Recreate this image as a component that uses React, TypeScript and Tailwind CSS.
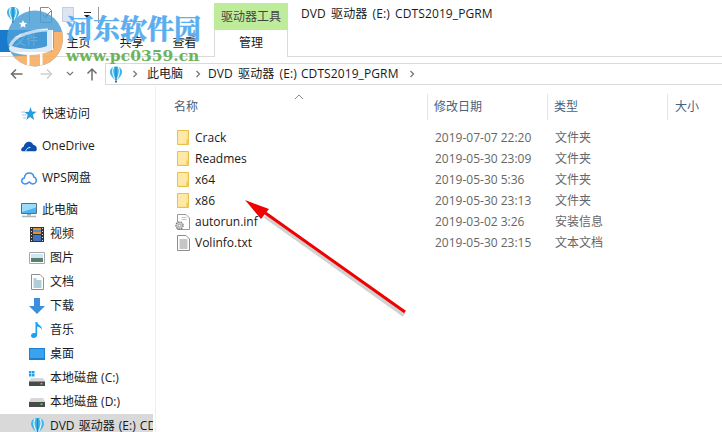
import React from "react";

const cjk = "font-['Open_Sans','Noto_Sans_CJK_SC',sans-serif]";

const Chevron = ({ className = "" }: { className?: string }) => (
  <svg width="6" height="8" viewBox="0 0 6 8" className={`shrink-0 ${className}`}>
    <path d="M1.5 1l3 3-3 3" fill="none" stroke="#777" strokeWidth="1.3" />
  </svg>
);

// CorelDRAW style balloon, used for the drive
const Balloon = ({ w = 12, h = 16 }: { w?: number; h?: number }) => (
  <svg width={w} height={h} viewBox="0 0 12 16" className="shrink-0">
    <path d="M6 0C2 0 0 2.500 0 5.500 0 8.800 3 11.800 5 13.500h2c2-1.700 5-4.700 5-8C12 2.500 10 0 6 0z" fill="#3fb4e8" />
    <path d="M3.800.6C2.800 2 2.400 4 2.700 6c.3 2.500 1.300 5 2.500 7M8.200.6C9.200 2 9.600 4 9.300 6c-.3 2.500-1.300 5-2.500 7" fill="none" stroke="#e6f8fd" strokeWidth="1.200" />
    <path d="M6 .5v13" stroke="#1787c8" strokeWidth="1.200" />
    <path d="M5 14h2v2H5z" fill="#2b6f9f" />
  </svg>
);

const Folder = () => (
  <svg width="12" height="15" viewBox="0 0 12 15" className="shrink-0">
    <path d="M.5.5h11v14H.5z" fill="#fde28f" stroke="#e9c04e" />
    <path d="M1 1h8.500v12H1z" fill="#ffe9a8" />
    <path d="M9.500 9.500h2v5h-2z" fill="#f2c94f" />
  </svg>
);

const InfIcon = () => (
  <svg width="15" height="16" viewBox="0 0 15 16" className="shrink-0 -ml-[2px]">
    <path d="M2.500.5h8.500l3.500 3.500v11.500h-12z" fill="#fff" stroke="#9a9a9a" />
    <path d="M6.500 3.500h5M6.500 5.500h5" stroke="#c4c4c4" />
    <circle cx="4.500" cy="11.500" r="3.600" fill="#d0d0d0" stroke="#777" strokeDasharray="1.600 .9" strokeWidth="1.200" />
    <circle cx="4.500" cy="11.500" r="1.300" fill="#fff" stroke="#777" strokeWidth=".6" />
  </svg>
);

const TxtIcon = () => (
  <svg width="13" height="16" viewBox="0 0 13 16" className="shrink-0">
    <path d="M.5.5h8.500l3.500 3.500v11.500H.5z" fill="#fff" stroke="#8c8c8c" />
    <path d="M2.500 5h8M2.500 7h8M2.500 9h8M2.500 11h8M2.500 13h8" stroke="#8c8c8c" strokeWidth="1" />
  </svg>
);

const icons: Record<string, React.ReactNode> = {
  star: (
    <svg width="16" height="14" viewBox="0 0 16 14">
      <path d="M9.500 0l1.500 4.600 4.500.2-3.600 2.900L13.200 13 9 10.100 5.400 13l1.200-5.200L3.500 5l4.400-.3z" fill="#2b9be0" />
      <path d="M0 5h4M1 8h4M2 11h3" stroke="#9ccdec" />
    </svg>
  ),
  cloud: (
    <svg width="17" height="11" viewBox="0 0 17 11">
      <path d="M1 10.500C-.5 9 .3 6.300 2.600 6 3.600 2.400 6 .5 8.500.5c2 0 3.700 1.200 4.500 3.200 2.300.300 4 2.400 3.800 4.600-.1 1-.5 1.700-1.100 2.200z" fill="#0b4fb0" />
      <path d="M5 10.500C5.500 8 7.500 6.500 10 6.500" stroke="#fff" fill="none" />
    </svg>
  ),
  wps: (
    <svg width="16" height="13" viewBox="0 0 16 13">
      <path d="M4 12C2 12 .8 10.500.8 9 .8 7.400 2 6.200 3.300 6 3.700 3 5.800 1 8.300 1c2.400 0 4.200 1.700 4.500 4 1.500.3 2.500 1.500 2.500 3.200 0 2-1.500 3.800-3.500 3.800-1.500 0-2.500-1-3.500-2-1 1-2 2-4.300 2z" fill="none" stroke="#3f8fe8" strokeWidth="1.500" />
    </svg>
  ),
  pc: (
    <svg width="16" height="15" viewBox="0 0 16 15">
      <path d="M.5.5h15v10H.5z" fill="#4db4ee" stroke="#5c6f80" />
      <path d="M1 1h14v3.500L1 9z" fill="#9bdcf9" />
      <path d="M6 11h4v1.500H6z" fill="#9aa6b0" />
      <path d="M1 13.500h14" stroke="#a9b6c0" strokeWidth="1.500" />
    </svg>
  ),
  video: (
    <svg width="14" height="15" viewBox="0 0 14 15">
      <path d="M0 0h14v15H0z" fill="#333" />
      <path d="M3 1h8v6H3z" fill="#e0913c" />
      <path d="M3 8h8v6H3z" fill="#3f74c4" />
      <path d="M3 3h8v2H3z" fill="#4a8fd6" />
      <path d="M1 1.500h1M1 4.500h1M1 7.500h1M1 10.500h1M1 13.500h1M12 1.500h1M12 4.500h1M12 7.500h1M12 10.500h1M12 13.500h1" stroke="#ddd" />
    </svg>
  ),
  pic: (
    <svg width="16" height="12" viewBox="0 0 16 12">
      <path d="M.5.5h15v11H.5z" fill="#fff" stroke="#a8a8a8" />
      <path d="M2 2h12v4H2z" fill="#cfe6f5" />
      <path d="M2 6h12v4H2z" fill="#58806e" />
    </svg>
  ),
  doc: (
    <svg width="13" height="16" viewBox="0 0 13 16">
      <path d="M.5.5h8.500l3.500 3.500v11.500H.5z" fill="#fff" stroke="#8f8f8f" />
      <path d="M2.500 5h3M2.500 7h8M2.500 9h8M2.500 11h8M2.500 13h8" stroke="#5f9db5" />
    </svg>
  ),
  down: (
    <svg width="16" height="16" viewBox="0 0 16 16">
      <path d="M5 0h6v8h5l-8 8-8-8h5z" fill="#3b8fdc" />
    </svg>
  ),
  music: (
    <svg width="12" height="16" viewBox="0 0 12 16">
      <path d="M4.500 0h1.700c.4 3 5.300 3.500 4.800 8-.5-1.800-2.500-3-4.800-3.500V13c0 1.800-1.800 3-3.500 3S0 15 0 13.500 1.500 11 3 11c.6 0 1.100.1 1.500.3z" fill="#1ea0ee" />
    </svg>
  ),
  desk: (
    <svg width="16" height="12" viewBox="0 0 16 12">
      <path d="M0 0h16v12H0z" fill="#1c7fd0" />
      <path d="M1 1h14v9H1z" fill="#3aa3ee" />
    </svg>
  ),
  c: (
    <svg width="16" height="15" viewBox="0 0 16 15">
      <path d="M0 0h2.500v2.500H0zM3 0h2.500v2.500H3zM0 3h2.500v2.500H0zM3 3h2.500v2.500H3z" fill="#1ea0ee" />
      <path d="M2 7h12l2 3v5H0v-5z" fill="#d8d8d8" />
      <path d="M0 10.500h16V15H0z" fill="#4a4a4a" />
      <path d="M11.500 12h2v1.500h-2z" fill="#4fe04f" />
    </svg>
  ),
  d: (
    <svg width="16" height="9" viewBox="0 0 16 9">
      <path d="M2 0h12l2 3.500V9H0V3.500z" fill="#d8d8d8" />
      <path d="M0 4h16v5H0z" fill="#4a4a4a" />
      <path d="M11.500 5.500h2V7h-2z" fill="#4fe04f" />
    </svg>
  ),
  dvd: <Balloon w={13} h={17} />,
};

const nav = [
  { label: "快速访问", icon: "star", top: true },
  { label: "OneDrive", icon: "cloud", top: true },
  { label: "WPS网盘", icon: "wps", top: true },
  { label: "此电脑", icon: "pc", top: true },
  { label: "视频", icon: "video" },
  { label: "图片", icon: "pic" },
  { label: "文档", icon: "doc" },
  { label: "下载", icon: "down" },
  { label: "音乐", icon: "music" },
  { label: "桌面", icon: "desk" },
  { label: "本地磁盘 (C:)", icon: "c" },
  { label: "本地磁盘 (D:)", icon: "d" },
  { label: "DVD 驱动器 (E:) CDTS2019_PGRM", icon: "dvd", active: true },
];

const files = [
  { name: "Crack", date: "2019-07-07 22:20", type: "文件夹", size: "" },
  { name: "Readmes", date: "2019-05-30 23:09", type: "文件夹", size: "" },
  { name: "x64", date: "2019-05-30 5:36", type: "文件夹", size: "" },
  { name: "x86", date: "2019-05-30 23:13", type: "文件夹", size: "" },
  { name: "autorun.inf", date: "2019-03-02 3:26", type: "安装信息", size: "1 KB" },
  { name: "Volinfo.txt", date: "2019-05-30 23:15", type: "文本文档", size: "1 KB" },
];

const Watermark = () => (
  <>
    <svg width="56" height="57" viewBox="0 0 56 57" className="absolute left-[7px] top-[10px] opacity-85">
      <defs>
        <clipPath id="disc">
          <circle cx="28" cy="28.500" r="28" />
        </clipPath>
      </defs>
      <g clipPath="url(#disc)">
        <path d="M0 0h56v57H0z" fill="#4d9fd6" />
        <path d="M0 46Q25 48 47 38V22H56V57H0z" fill="#f7a95a" />
        <path d="M2 38Q24 46 43 38" fill="none" stroke="#fff" strokeWidth="6" />
        <path d="M40 20h6v20h-6z" fill="#fff" />
        <path d="M3 36Q8 26 18 24 30 20 41 20" fill="none" stroke="#dcecf6" strokeWidth="3" />
        <path d="M20 45h2.500v12H20zM33 44h2.500v13H33z" fill="#fff" />
        <path d="M16 10l1.200 2.800 2.800.2-2.100 1.900.7 2.800-2.600-1.500-2.600 1.500.7-2.800-2.100-1.900 2.800-.2z" fill="#fff" />
      </g>
    </svg>
    <div className="absolute left-[66px] top-[10px] font-['Noto_Serif_CJK_SC','Noto_Sans_CJK_SC',serif] text-[27px] leading-[36px] font-bold text-[#5aaef0] [-webkit-text-stroke:0.6px_#5aaef0] whitespace-nowrap">
      河东软件园
    </div>
    <div className="absolute left-[66px] top-[47px] font-['DejaVu_Serif',serif] text-[15.5px] leading-[18px] font-bold text-[#6cb35a] whitespace-nowrap">
      www.pc0359.cn
    </div>
  </>
);

export default function App() {
  return (
    <div className={`relative w-[722px] h-[432px] overflow-hidden bg-white text-[12px] text-[#1a1a1a] ${cjk}`}>
      {/* Title and ribbon tabs */}
      <div className="h-[57px] flex flex-col border-b border-[#dadada]">
        <div className="h-[30px] flex items-start">
          <div className="w-[214px] h-[30px] flex items-center pl-[7px] pb-[1px]">
            <Balloon w={12} h={16} />
            <div className="w-px h-[16px] bg-[#999] ml-[10px]" />
            <svg width="12" height="16" viewBox="0 0 12 16" className="ml-[10px]">
              <path d="M.5.5h8l3 3v12H.5z" fill="#fff" stroke="#888" />
              <path d="M3 8l2.500 2.500L8 8" fill="none" stroke="#555" />
              <path d="M6 9l5-5" stroke="#d9662b" />
            </svg>
            <div className="w-[12px] h-[15px] bg-[#dde5f2] border border-[#c5cfe0] ml-[10px]" />
            <div className="w-[8px] ml-[9px] flex flex-col items-center gap-[2px]">
              <div className="w-[7px] h-px bg-[#222]" />
              <div className="w-0 h-0 border-x-[3px] border-x-transparent border-t-[3px] border-t-[#222]" />
            </div>
            <div className="w-px h-[16px] bg-[#999] ml-[7px]" />
          </div>
          <div className="w-[74px] h-[27px] mt-[3px] bg-[#bfec9a] flex items-center justify-center text-[#444]">驱动器工具</div>
          <div className="ml-[13px] h-[30px] leading-[28px] whitespace-nowrap [word-spacing:2px] tracking-[0.1px]">DVD 驱动器 (E:) CDTS2019_PGRM</div>
        </div>
        <div className="flex-1 flex">
          <div className="w-[52px] h-[22px] bg-[#1979ca] text-white flex items-center justify-center">文件</div>
          <div className="w-[162px] flex">
            <div className="w-[53px] text-center leading-[25px]">主页</div>
            <div className="w-[53px] text-center leading-[25px]">共享</div>
            <div className="w-[53px] text-center leading-[25px]">查看</div>
          </div>
          <div className="w-[74px] h-[27px] border-x border-[#dadada] text-center leading-[25px] bg-white">管理</div>
        </div>
      </div>

      {/* Address bar */}
      <div className="h-[29px] pt-[6px] flex items-start">
        <div className="w-[105px] h-[22px] flex items-center pl-[10px]">
          <svg width="13" height="12" viewBox="0 0 13 12">
            <path d="M12.500 6H1.500M6 1.500L1.500 6 6 10.500" fill="none" stroke="#6d6d6d" strokeWidth="1.500" />
          </svg>
          <svg width="13" height="12" viewBox="0 0 13 12" className="ml-[17px]">
            <path d="M.5 6h11M7 1.500L11.500 6 7 10.500" fill="none" stroke="#cfcfcf" strokeWidth="1.500" />
          </svg>
          <svg width="8" height="6" viewBox="0 0 8 6" className="ml-[13px]">
            <path d="M1 1l3 3 3-3" fill="none" stroke="#777" strokeWidth="1.200" />
          </svg>
          <svg width="12" height="14" viewBox="0 0 12 14" className="ml-[12px]">
            <path d="M6 13.500V2M1.500 6.500L6 2l4.500 4.500" fill="none" stroke="#6d6d6d" strokeWidth="1.500" />
          </svg>
        </div>
        <div className="flex-1 h-[22px] border-y border-l border-[#d9d9d9] flex items-center pl-[4px] whitespace-nowrap">
          <Balloon w={12} h={17} />
          <Chevron className="ml-[10px]" />
          <span className="ml-[9px]">此电脑</span>
          <Chevron className="ml-[12px]" />
          <span className="ml-[7px] [word-spacing:2px] tracking-[0.1px]">DVD 驱动器 (E:)</span>
          <span className="ml-[4px] tracking-[0.1px]">CDTS2019_PGRM</span>
          <Chevron className="ml-[10px]" />
        </div>
      </div>

      <div className="flex h-[346px]">
        {/* Navigation pane */}
        <div className="w-[156px] shrink-0 border-r border-[#efefef] pt-[16px] overflow-hidden">
          {nav.map((n, i) => (
            <div
              key={n.label}
              className={`h-[24px] flex items-center whitespace-nowrap overflow-hidden ${i < 3 ? "mb-[8px]" : ""} ${n.active ? "bg-[#d9d9d9] w-[153px] [word-spacing:1px]" : ""}`}
            >
              <div className={`flex justify-center shrink-0 w-[16px] ${n.top ? "ml-[21px]" : "ml-[29px]"}`}>{icons[n.icon]}</div>
              <span className="ml-[5px]">{n.label}</span>
            </div>
          ))}
        </div>

        {/* File list */}
        <div className="flex-1 min-w-0 relative">
          <svg width="10" height="6" viewBox="0 0 10 6" className="absolute left-[138px] top-[8px]">
            <path d="M1 5l4-4 4 4" fill="none" stroke="#888" />
          </svg>
          <div className="h-[41px] flex text-[#4c607a]">
            <div className="w-[272px] h-[26px] mt-[8px] pl-[18px] leading-[26px] border-r border-[#e5e5e5]">名称</div>
            <div className="w-[120px] h-[26px] mt-[8px] pl-[6px] leading-[26px] border-r border-[#e5e5e5]">修改日期</div>
            <div className="w-[120px] h-[26px] mt-[8px] pl-[6px] leading-[26px] border-r border-[#e5e5e5]">类型</div>
            <div className="pl-[7px] mt-[8px] leading-[26px]">大小</div>
          </div>
          {files.map((f) => (
            <div key={f.name} className="h-[21px] flex items-center whitespace-nowrap">
              <div className="w-[272px] flex items-center pl-[21px]">
                <div className="w-[18px] flex justify-start">
                  {f.name.endsWith(".inf") ? <InfIcon /> : f.name.endsWith(".txt") ? <TxtIcon /> : <Folder />}
                </div>
                <span>{f.name}</span>
              </div>
              <div className="w-[120px] pl-[7px] text-[#666]">{f.date}</div>
              <div className="w-[120px] pl-[7px] text-[#666]">{f.type}</div>
              <div className="w-[54px] text-right text-[#666] relative left-[30px]">{f.size}</div>
            </div>
          ))}
        </div>
      </div>

      <Watermark />

      {/* Red annotation arrow */}
      <svg width="722" height="432" className="absolute left-0 top-0 pointer-events-none">
        <path d="M405 313L266 214" stroke="#000" strokeOpacity=".18" strokeWidth="4" fill="none" transform="translate(-1 2)" />
        <path d="M405 312L264 212" stroke="#f00000" strokeWidth="3" fill="none" />
        <path d="M245 200L269 209 261 219z" fill="#f00000" />
      </svg>
    </div>
  );
}
